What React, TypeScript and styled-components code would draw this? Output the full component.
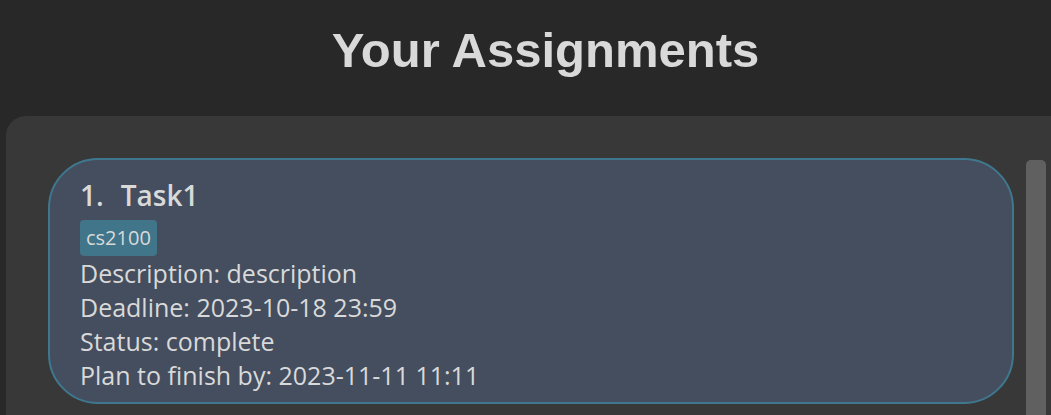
import React from "react";
import styled, { createGlobalStyle } from "styled-components";

const GlobalStyle = createGlobalStyle`
  *, *::before, *::after { box-sizing: border-box; }
  body {
    margin: 0;
    background: #282828;
    color: #d9d9d9;
    font-family: "Open Sans", "Noto Sans", sans-serif;
    overflow: hidden;
  }
`;

const Page = styled.main`
  display: flex;
  flex-direction: column;
  height: 100vh;
  padding-left: 6px;
`;

const Header = styled.header`
  padding: 22px 0 38px 34px;
  text-align: center;
`;

const Title = styled.h1`
  margin: 0;
  font: bold 49px/56px "Liberation Sans", Arial, sans-serif;
`;

const Panel = styled.section`
  display: flex;
  flex: 1;
  gap: 12px;
  min-height: 0;
  padding: 42px 5px 0 42px;
  border-top-left-radius: 20px;
  background: #383838;
`;

const TaskList = styled.ul`
  flex: 1;
  margin: 0;
  padding: 0;
  list-style: none;
`;

const Card = styled.li`
  padding: 17px 30px 10px;
  border: 2px solid #3f788e;
  border-radius: 50px;
  background: #444e5f;
`;

const TaskName = styled.h2`
  display: flex;
  gap: 17px;
  margin: 0 0 7px;
  font: 600 28px/36px "Open Sans", "Noto Sans", sans-serif;
`;

const Tag = styled.span`
  display: block;
  width: fit-content;
  padding: 0 6px;
  border-radius: 4px;
  background: #40758a;
  font-size: 20px;
  line-height: 36px;
`;

const Detail = styled.p`
  margin: 0;
  font-size: 25px;
  line-height: 34px;
`;

const ScrollThumb = styled.div`
  width: 20px;
  margin-top: 2px;
  border-radius: 5px 5px 0 0;
  background: #606060;
`;

const tasks = [
  {
    name: "Task1",
    tag: "cs2100",
    details: [
      "Description: description",
      "Deadline: 2023-10-18 23:59",
      "Status: complete",
      "Plan to finish by: 2023-11-11 11:11",
    ],
  },
];

export default function App() {
  return (
    <Page>
      <GlobalStyle />
      <Header>
        <Title>Your Assignments</Title>
      </Header>
      <Panel>
        <TaskList>
          {tasks.map((task, index) => (
            <Card key={task.name}>
              <TaskName>
                <span>{index + 1}.</span>
                <span>{task.name}</span>
              </TaskName>
              <Tag>{task.tag}</Tag>
              {task.details.map((detail) => (
                <Detail key={detail}>{detail}</Detail>
              ))}
            </Card>
          ))}
        </TaskList>
        <ScrollThumb />
      </Panel>
    </Page>
  );
}
